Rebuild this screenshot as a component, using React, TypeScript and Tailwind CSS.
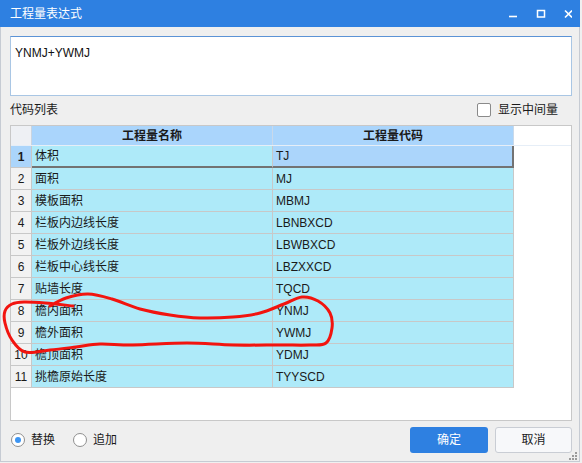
import React from "react";

const ROWS = [
  { name: "体积", code: "TJ" },
  { name: "面积", code: "MJ" },
  { name: "模板面积", code: "MBMJ" },
  { name: "栏板内边线长度", code: "LBNBXCD" },
  { name: "栏板外边线长度", code: "LBWBXCD" },
  { name: "栏板中心线长度", code: "LBZXXCD" },
  { name: "贴墙长度", code: "TQCD" },
  { name: "檐内面积", code: "YNMJ" },
  { name: "檐外面积", code: "YWMJ" },
  { name: "檐顶面积", code: "YDMJ" },
  { name: "挑檐原始长度", code: "TYYSCD" },
];

// hand-drawn red annotation, smoothed through points
const MARK: [number, number][] = [
  [50, 306], [66, 298], [88, 294], [112, 299], [140, 309], [170, 315], [200, 318],
  [233, 317], [260, 313], [284, 304], [302, 297], [318, 301], [330, 313], [332, 328],
  [326, 343], [310, 345], [280, 345], [233, 345], [187, 343], [133, 345], [100, 344],
  [76, 347], [50, 350], [25, 352], [12, 340], [5, 323], [5, 311], [12, 304], [24, 302],
  [45, 303], [73, 306],
];

function smoothPath(pts: [number, number][]) {
  let d = `M ${pts[0][0]} ${pts[0][1]}`;
  for (let i = 0; i < pts.length - 1; i++) {
    const p0 = pts[i - 1] || pts[i];
    const p1 = pts[i];
    const p2 = pts[i + 1];
    const p3 = pts[i + 2] || p2;
    const c1x = p1[0] + (p2[0] - p0[0]) / 6;
    const c1y = p1[1] + (p2[1] - p0[1]) / 6;
    const c2x = p2[0] - (p3[0] - p1[0]) / 6;
    const c2y = p2[1] - (p3[1] - p1[1]) / 6;
    d += ` C ${c1x} ${c1y}, ${c2x} ${c2y}, ${p2[0]} ${p2[1]}`;
  }
  return d;
}

export default function App() {
  return (
    <div className="w-[582px] h-[463px] bg-[#f0f0f0] relative overflow-hidden font-['Liberation_Sans','Noto_Sans_CJK_SC',sans-serif] text-[12px] text-[#1a1a1a]">
      <div className="w-[580px] flex flex-col">
        {/* Title bar */}
        <div className="h-[27px] bg-[#2e80e1] flex items-center pl-[10px] text-white text-[12px]">
          <span className="flex-1">工程量表达式</span>
          <svg width="72" height="27" viewBox="0 0 72 27" className="mr-[8px]">
            <line x1="9" y1="16.5" x2="17" y2="16.5" stroke="white" strokeWidth="1.6" />
            <rect x="37.5" y="10.5" width="7" height="6.5" fill="none" stroke="white" strokeWidth="1.5" />
            <path d="M65 10.5 L72 17.5 M72 10.5 L65 17.5" stroke="white" strokeWidth="1.6" />
          </svg>
        </div>

        {/* Body */}
        <div className="h-[435px] bg-[#efefef] border-x border-b border-[#c6cbd3] px-[9px] flex flex-col">
          <div className="mt-[9px] h-[60px] w-[562px] bg-white border border-[#a9c6e4] border-t-[#5b93d6] pl-[4px] pt-[7px] text-[12px] text-[#111]">
            YNMJ+YWMJ
          </div>

          <div className="h-[29px] w-[562px] flex items-center justify-between pb-[2px]">
            <span>代码列表</span>
            <div className="flex items-center gap-[7px] pr-[14px]">
              <div className="w-[14px] h-[14px] bg-white border border-[#8a8a8a] rounded-[2px]" />
              <span>显示中间量</span>
            </div>
          </div>

          {/* Table */}
          <div className="h-[296px] w-[562px] bg-white border border-[#c8c8c8] flex flex-col">
            <div className="flex h-[20px] border-b border-[#e6eef7] font-bold">
              <div className="w-[21px] h-full bg-[#eef0f4] border-r border-[#c9d4e0]" />
              <div className="w-[241px] h-full bg-[#aad5fc] border-r border-[#c9d9ea] flex items-center justify-center">工程量名称</div>
              <div className="w-[241px] h-full bg-[#aad5fc] border-r border-[#c9d9ea] flex items-center justify-center">工程量代码</div>
            </div>
            {ROWS.map((r, i) => {
              const sel = i === 0;
              return (
                <div key={r.code} className="flex h-[22px]">
                  <div
                    className={`w-[21px] h-full border-r border-b border-[#c8c8c8] flex items-center justify-center ${
                      sel ? "bg-[#abd5fb] font-bold" : "bg-[#f2f2f2]"
                    }`}
                  >
                    {i + 1}
                  </div>
                  <div
                    className={`w-[241px] h-full bg-[#aeeaf9] border-r border-[#c8c8c8] flex items-center pl-[3px] ${
                      sel ? "border-b-2 border-b-[#737373]" : "border-b"
                    }`}
                  >
                    {r.name}
                  </div>
                  <div
                    className={`w-[241px] h-full flex items-center pl-[3px] ${
                      sel
                        ? "bg-[#abd5fb] border-r-2 border-b-2 border-[#737373]"
                        : "bg-[#aeeaf9] border-r border-b border-[#c8c8c8]"
                    }`}
                  >
                    {r.code}
                  </div>
                </div>
              );
            })}
          </div>

          {/* Footer */}
          <div className="flex items-start pt-[6px] w-[562px]">
            <div className="flex items-center h-[26px] gap-[6px] pl-[1px]">
              <div className="w-[14px] h-[14px] rounded-full border border-[#8f8f8f] bg-white flex items-center justify-center">
                <div className="w-[6px] h-[6px] rounded-full bg-[#3d95f2]" />
              </div>
              <span>替换</span>
              <div className="w-[14px] h-[14px] rounded-full border border-[#8f8f8f] bg-white ml-[12px]" />
              <span>追加</span>
            </div>
            <div className="flex-1" />
            <button className="w-[78px] h-[26px] rounded-[3px] bg-[#2e80e1] text-white text-[12px]">确定</button>
            <button className="w-[77px] h-[26px] ml-[7px] rounded-[3px] bg-[#f7f8fa] border border-[#c9cdd4] text-[12px] text-[#1a1a1a]">取消</button>
          </div>
        </div>
      </div>

      {/* resize grip */}
      <svg className="absolute left-[568px] top-[451px]" width="10" height="10" viewBox="0 0 10 10">
        {[
          [7, 1], [4, 4], [7, 4], [1, 7], [4, 7], [7, 7],
        ].map(([x, y]) => (
          <rect key={`${x}-${y}`} x={x} y={y} width="2" height="2" fill="#9a9a9a" />
        ))}
      </svg>

      {/* red annotation */}
      <svg className="absolute inset-0 pointer-events-none" width="582" height="463">
        <path d={smoothPath(MARK)} fill="none" stroke="#f2140f" strokeWidth="3" strokeLinecap="round" strokeLinejoin="round" />
      </svg>
    </div>
  );
}
